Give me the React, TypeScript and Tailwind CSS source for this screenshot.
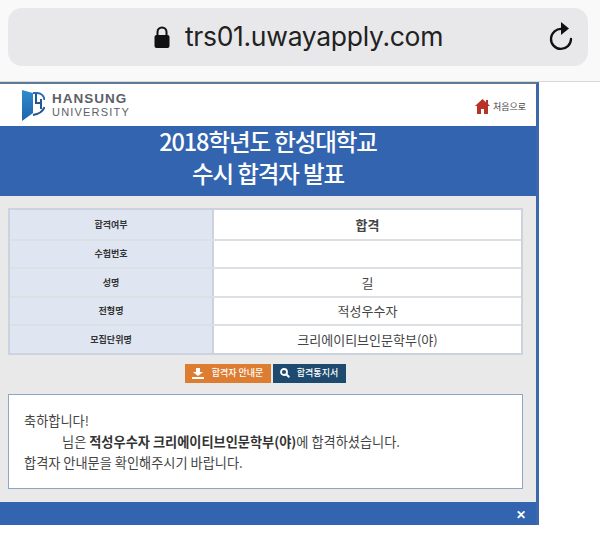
const rows = [
  { label: '합격여부', value: '합격', bold: true },
  { label: '수험번호', value: '' },
  { label: '성명', value: '길' },
  { label: '전형명', value: '적성우수자' },
  { label: '모집단위명', value: '크리에이티브인문학부(야)' },
];

const font = { fontFamily: '"Noto Sans CJK KR", "Noto Sans", sans-serif' };

function Logo() {
  return (
    <div className="flex items-center gap-[7px]">
      <svg width="23" height="31" viewBox="0 0 23 31">
        <defs>
          <linearGradient id="panel" x1="0" y1="0" x2="0" y2="1">
            <stop offset="0" stopColor="#2f8bcf" />
            <stop offset="1" stopColor="#1f64a8" />
          </linearGradient>
        </defs>
        <path d="M0 0 L11 3 V23 L0 31 Z" fill="url(#panel)" />
        <path d="M11 3 H15 C19 3 22 6 22.5 10" fill="none" stroke="#2a6cae" strokeWidth="2" />
        <path d="M14 4 V13 H20 M19 9 V19 M22.5 17 C21 21 17 24 11 25" fill="none" stroke="#24578f" strokeWidth="2" />
      </svg>
      <div className="flex flex-col font-['Liberation_Sans',sans-serif] text-[#5c6066]">
        <span className="text-[13.5px] leading-[15px] font-bold tracking-[1px]">HANSUNG</span>
        <span className="text-[11px] leading-[13px] tracking-[1.2px]">UNIVERSITY</span>
      </div>
    </div>
  );
}

export default function App() {
  return (
    <div className="w-[600px] h-[540px] overflow-hidden bg-white text-[#333]" style={font}>
      <div className="h-[82px] bg-[#f9f9f9] border-b border-[#d8d8d8] pt-[8px] px-[8px]">
        <div className="h-[58px] w-[580px] rounded-[14px] bg-[#e8e8ea] flex items-center relative">
          <div className="flex-1 flex items-center justify-center gap-[14px] text-black">
            <svg width="18" height="24" viewBox="0 0 18 24">
              <path d="M4.5 11 V7 a4.5 4.5 0 0 1 9 0 V11" fill="none" stroke="#111" strokeWidth="2" />
              <rect x="1.5" y="10" width="15" height="13" rx="2" fill="#111" />
            </svg>
            <span className="text-[26.5px] font-['Inter',sans-serif] tracking-[-0.3px] text-[#222]">trs01.uwayapply.com</span>
          </div>
          <svg className="absolute right-[14px] top-[14px]" width="26" height="30" viewBox="0 0 26 30">
            <path d="M14 7 A10 10 0 1 0 23 17" fill="none" stroke="#111" strokeWidth="2.3" strokeLinecap="round" />
            <path d="M13 0 L21 6.5 L13 13 Z" fill="#111" />
          </svg>
        </div>
      </div>

      <div className="w-[539px] h-[443px] border-t-2 border-t-[#5f7a96] border-r-[3px] border-r-[#3d68ab] flex flex-col bg-[#e9e9ea]">
        <div className="h-[42px] bg-white flex items-center justify-between pl-[22px] pr-[10px]">
          <Logo />
          <div className="flex items-center gap-[3px] mt-[3px]">
            <svg width="15" height="15" viewBox="0 0 15 15">
              <path d="M7.5 0 L11 3.2 V1 H13 V5 L15 7 H13 V15 H9 V10 H6 V15 H2 V7 H0 Z" fill="#b93228" />
            </svg>
            <span className="text-[9px] text-[#444]">처음으로</span>
          </div>
        </div>
        <div className="h-[70px] bg-[#3264b0] flex flex-col items-center text-white text-[23.5px] leading-[32px] font-medium tracking-[-1.1px]">
          <div className="mt-[-1px]">2018학년도 한성대학교</div>
          <div>수시 합격자 발표</div>
        </div>

        <div className="flex-1 px-[8px] pt-[12px] pr-[13px]">
          <div className="border-2 border-[#ccd3df]">
            {rows.map((row, i) => (
              <div key={row.label} className={`flex h-[28.5px] ${i > 0 ? 'border-t-2 border-[#dcdfe4]' : ''}`}>
                <div className="w-[204px] bg-[#dfe6f2] border-r-2 border-[#ccd3df] flex items-center justify-center text-[9px] font-bold text-[#333]">
                  {row.label}
                </div>
                <div className={`flex-1 bg-white flex items-center justify-center text-[13px] text-[#444] ${row.bold ? 'font-bold text-[#222]' : ''}`}>
                  {row.value}
                </div>
              </div>
            ))}
          </div>

          <div className="flex justify-center gap-[2px] mt-[9px] pr-[1px]">
            <div className="w-[86px] h-[19px] bg-[#dd7d32] text-white flex items-center justify-center gap-[8px] text-[9px] font-medium">
              <svg width="12" height="11" viewBox="0 0 12 11">
                <path d="M4 0 H8 V4 H11 L6 8 L1 4 H4 Z M0 9 H12 V11 H0 Z" fill="#fff" />
              </svg>
              합격자 안내문
            </div>
            <div className="w-[73px] h-[19px] bg-[#1d4a6e] text-white flex items-center justify-center gap-[7px] text-[9px] font-medium">
              <svg width="10" height="10" viewBox="0 0 10 10">
                <circle cx="4" cy="4" r="3" fill="none" stroke="#fff" strokeWidth="1.8" />
                <path d="M6.3 6.3 L9.3 9.3" stroke="#fff" strokeWidth="2" />
              </svg>
              합격통지서
            </div>
          </div>

          <div className="mt-[11px] h-[95px] bg-white border border-[#8fa5c4] px-[15px] pt-[15px] text-[13.2px] leading-[21px] text-[#444]">
            <div>축하합니다!</div>
            <div className="pl-[38px]">
              님은 <b className="text-[#333]">적성우수자 크리에이티브인문학부(야)</b>에 합격하셨습니다.
            </div>
            <div>합격자 안내문을 확인해주시기 바랍니다.</div>
          </div>
        </div>

        <div className="h-[23px] bg-[#3264b0] flex items-center justify-end pr-[10px] text-white text-[12px] font-bold">
          ✕
        </div>
      </div>
    </div>
  );
}
